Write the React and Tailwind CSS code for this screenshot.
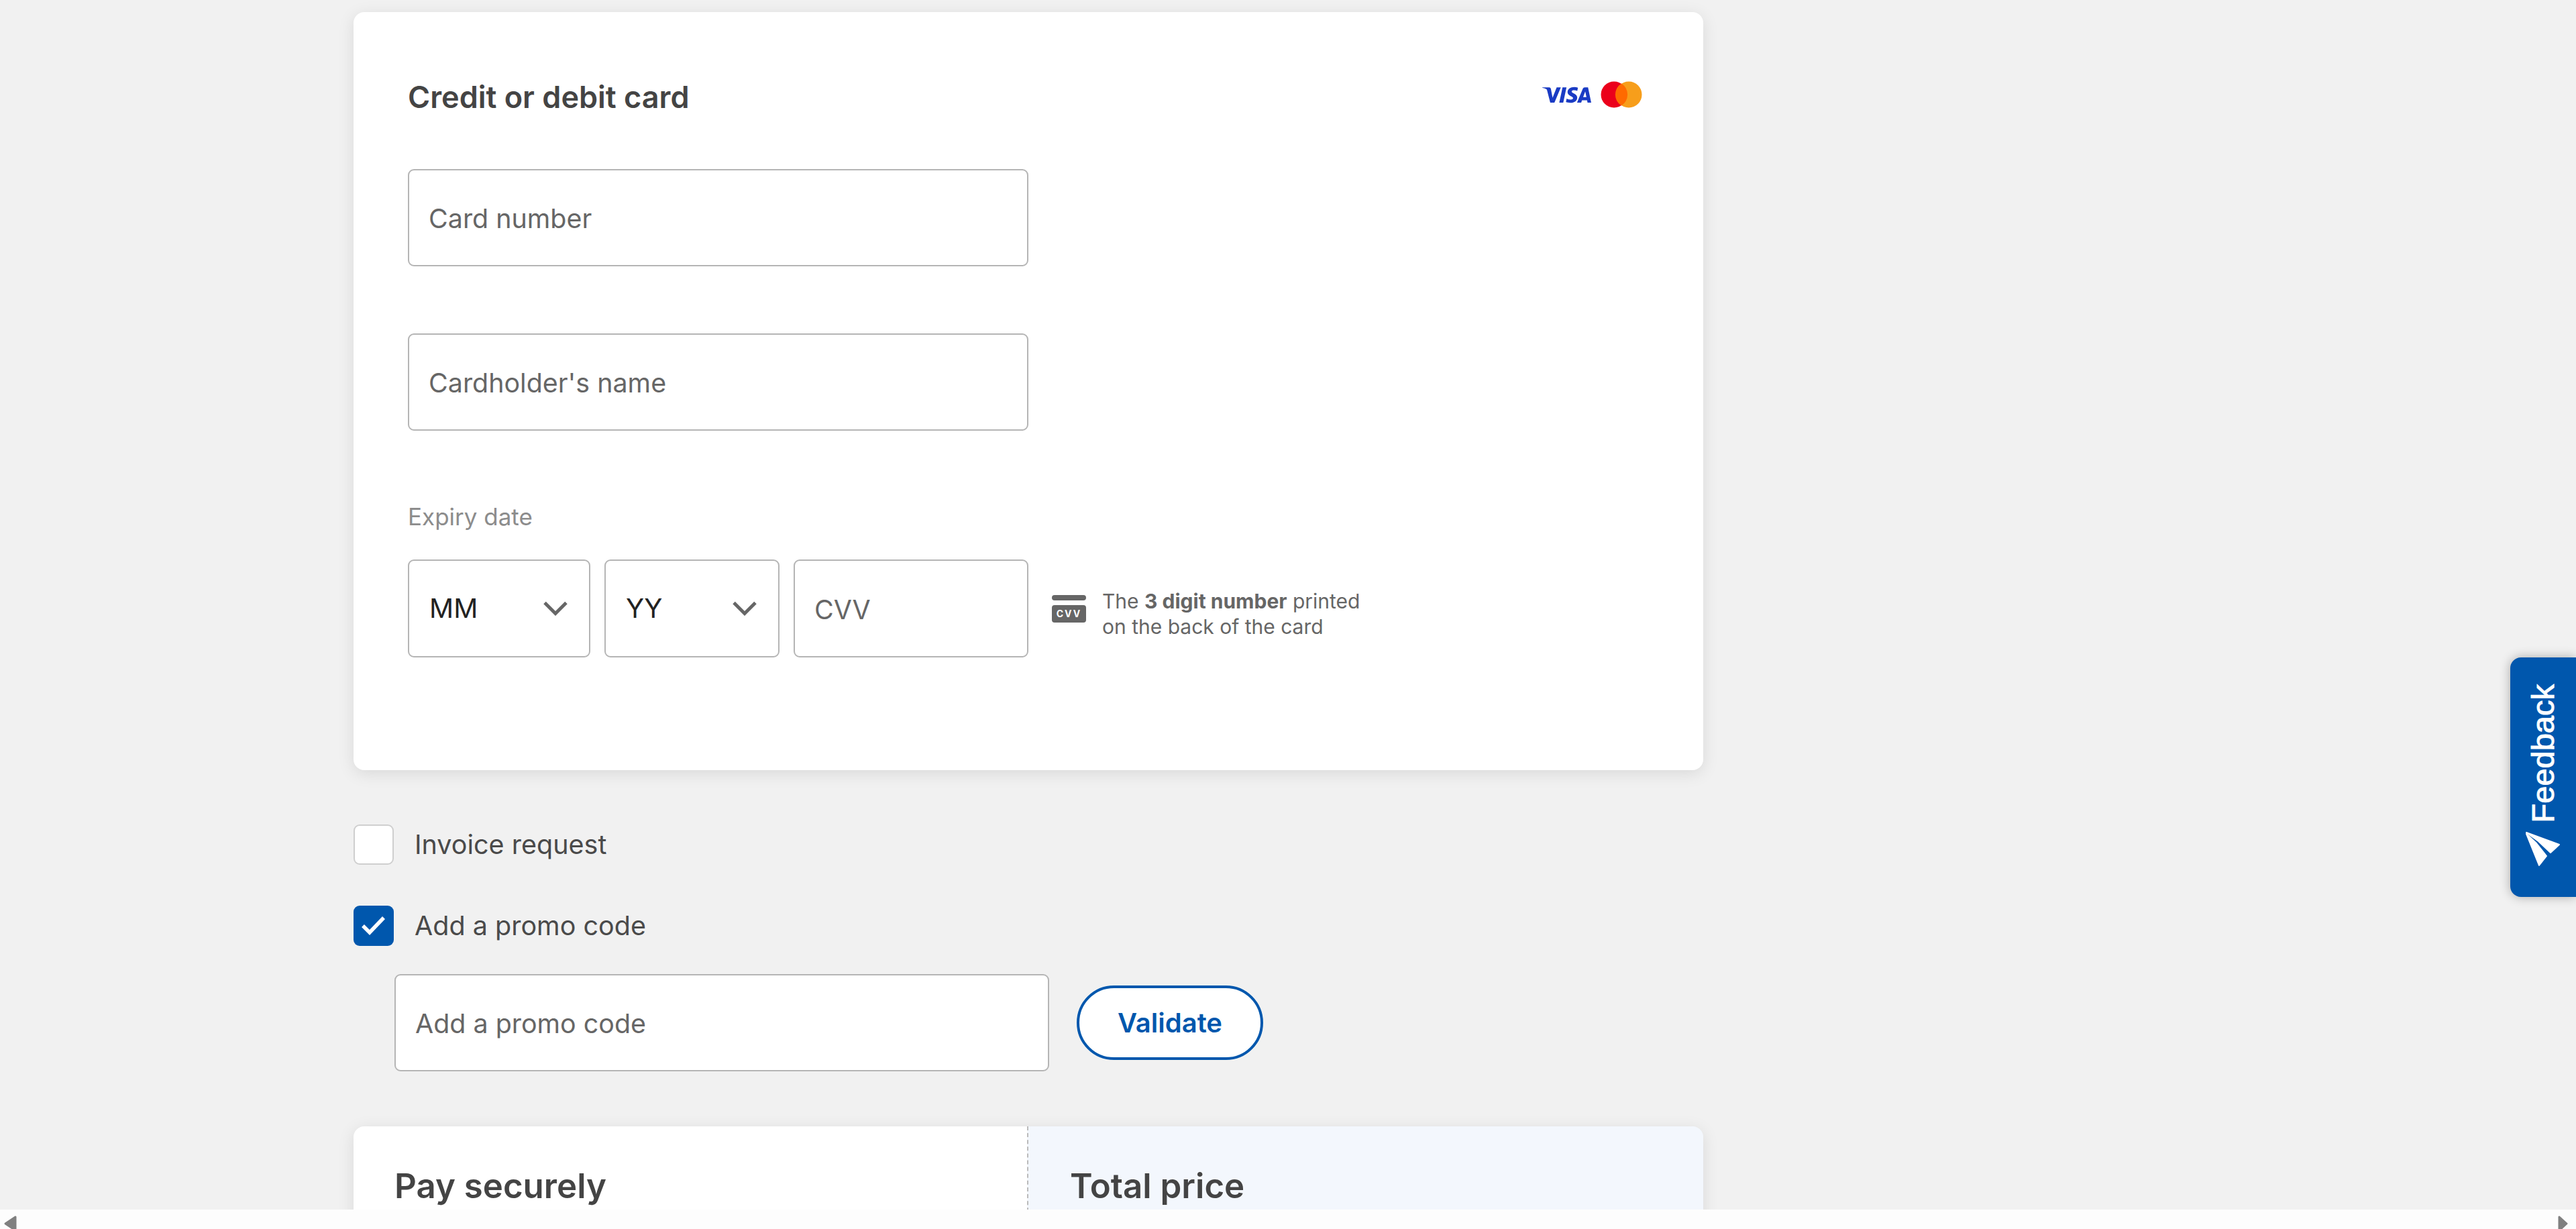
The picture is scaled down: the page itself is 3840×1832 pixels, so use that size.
import { SiVisa } from "react-icons/si"

const fieldClass = "flex items-center bg-white border-2 border-[#b5b5b5] rounded-[9px]"

const Field = ({ label, className }) => (
  <div className={`${fieldClass} h-[145px] pl-[29px] pt-[5px] text-[39.4px] text-[#666] ${className}`}>
    <span>{label}</span>
  </div>
)

const Chevron = () => (
  <svg width="36" height="22" viewBox="0 0 36 22" fill="none" stroke="#666" strokeWidth="5">
    <path d="M2 2.5 L18 18.5 L34 2.5" />
  </svg>
)

const SelectBox = ({ value, className }) => (
  <div className={`${fieldClass} h-[146px] pl-[30px] pr-[32px] justify-between text-[40px] text-[#222] ${className}`}>
    <span>{value}</span>
    <Chevron />
  </div>
)

const CheckRow = ({ label, checked }) => (
  <div className="flex items-center h-[60px]">
    {checked ? (
      <div className="w-[60px] h-[60px] rounded-[9px] bg-[#0057ad] flex items-center justify-center">
        <svg width="36" height="30" viewBox="0 0 36 30" fill="none" stroke="white" strokeWidth="5.5">
          <path d="M2 15 L12 25 L33 3" />
        </svg>
      </div>
    ) : (
      <div className="w-[60px] h-[60px] rounded-[9px] bg-white border-2 border-[#cfcfcf]"></div>
    )}
    <span className="ml-[31px] pt-[2px] text-[39.5px] text-[#4a4a4a]">{label}</span>
  </div>
)

const CvvIcon = () => (
  <div className="flex flex-col w-[51px] gap-[7px]">
    <div className="h-[8px] rounded-full bg-[#666]"></div>
    <div className="h-[26px] rounded-[4px] bg-[#666] flex items-center justify-center text-[14px] leading-none font-bold tracking-[2px] text-white">
      CVV
    </div>
  </div>
)

const App = () => {
  return (
    <div className="relative flex flex-col h-[1832px] bg-[#f1f1f1] overflow-hidden font-['Inter',sans-serif]">
      <div className="flex-1 min-h-0 overflow-hidden pt-[18px] pl-[527px]">
        <div className="w-[2012px]">
          {/* Card form */}
          <div className="h-[1130px] bg-white rounded-[16px] shadow-[0_5px_24px_rgba(0,0,0,0.1)] pt-[97px] pl-[81px] pr-[91px]">
            <div className="flex items-center justify-between h-[60px]">
              <h2 className="text-[45px] font-semibold text-[#444]">Credit or debit card</h2>
              <div className="flex items-center gap-[14px] mb-[8px]">
                <SiVisa size={73} color="#1a3bc4" />
                <svg width="62" height="40" viewBox="0 0 62 40">
                  <circle cx="20" cy="20" r="19.5" fill="#eb001b" />
                  <circle cx="42" cy="20" r="19.5" fill="#f79e1b" />
                  <path d="M31 3.5 A19.5 19.5 0 0 1 31 36.5 A19.5 19.5 0 0 1 31 3.5 Z" fill="#ff6a00" />
                </svg>
              </div>
            </div>

            <Field label="Card number" className="w-[925px] mt-[77px]" />
            <Field label="Cardholder's name" className="w-[925px] mt-[100px]" />

            <div className="mt-[106px] h-[44px] flex items-center text-[35px] text-[#8c8c8c]">Expiry date</div>
            <div className="flex items-center mt-[42px]">
              <SelectBox value="MM" className="w-[272px]" />
              <SelectBox value="YY" className="w-[261px] ml-[21px]" />
              <Field label="CVV" className="w-[350px] ml-[21px] h-[146px]" />
              <div className="ml-[35px]">
                <CvvIcon />
              </div>
              <p className="ml-[24px] pt-[15px] text-[30px] leading-[38px] text-[#666]">
                The <b className="font-bold">3 digit number</b> printed
                <br />
                on the back of the card
              </p>
            </div>
          </div>

          {/* Options */}
          <div className="mt-[81px]">
            <CheckRow label="Invoice request" />
          </div>
          <div className="mt-[61px]">
            <CheckRow label="Add a promo code" checked />
          </div>
          <div className="flex items-center mt-[42px] ml-[61px]">
            <Field label="Add a promo code" className="w-[976px]" />
            <button className="ml-[41px] w-[278px] h-[111px] rounded-full bg-white border-[4px] border-[#0057ad] text-[40px] font-semibold text-[#0057ad]">
              Validate
            </button>
          </div>

          {/* Pay securely */}
          <div className="flex mt-[82px] h-[400px] rounded-t-[16px] overflow-hidden shadow-[0_5px_24px_rgba(0,0,0,0.1)]">
            <div className="w-[1004px] bg-white pt-[59px] pl-[61px]">
              <h2 className="text-[51px] leading-[60px] font-semibold text-[#444]">Pay securely</h2>
            </div>
            <div className="flex-1 bg-[#f3f7fd] border-l-[2px] border-dashed border-[#bbb] pt-[59px] pl-[62px]">
              <h2 className="text-[51px] leading-[60px] font-semibold text-[#444]">Total price</h2>
            </div>
          </div>
        </div>
      </div>

      {/* Horizontal scrollbar */}
      <div className="flex items-start justify-between h-[29px] shrink-0 bg-[#fdfdfd] pt-[9px] pl-[6px] pr-[12px]">
        <svg width="19" height="24" viewBox="0 0 19 24" fill="#808080" stroke="#808080" strokeWidth="3" strokeLinejoin="round">
          <path d="M2 12 L17 2 L17 22 Z" />
        </svg>
        <svg width="15" height="24" viewBox="0 0 15 24" fill="#808080" stroke="#808080" strokeWidth="3" strokeLinejoin="round">
          <path d="M13 12 L2 2 L2 22 Z" />
        </svg>
      </div>

      {/* Feedback tab */}
      <div className="absolute right-0 top-[980px] w-[98px] h-[357px] bg-[#0057ad] rounded-l-[16px] shadow-[0_0_16px_rgba(0,0,0,0.3)] flex flex-col items-center pt-[40px]">
        <span className="[writing-mode:vertical-rl] rotate-180 text-[47px] leading-[52px] text-white [-webkit-text-stroke:1px_white] font-['Liberation_Sans',sans-serif]">
          Feedback
        </span>
        <svg className="mt-[14px]" width="52" height="52" viewBox="0 0 52 52" fill="white" stroke="white" strokeWidth="2" strokeLinejoin="round">
          <path d="M1 1 L50 19 L37 31 L19 14 Z" />
          <path d="M1 3 L16 17 L31 36 L20 50 Z" />
        </svg>
      </div>
    </div>
  )
}

export default App
